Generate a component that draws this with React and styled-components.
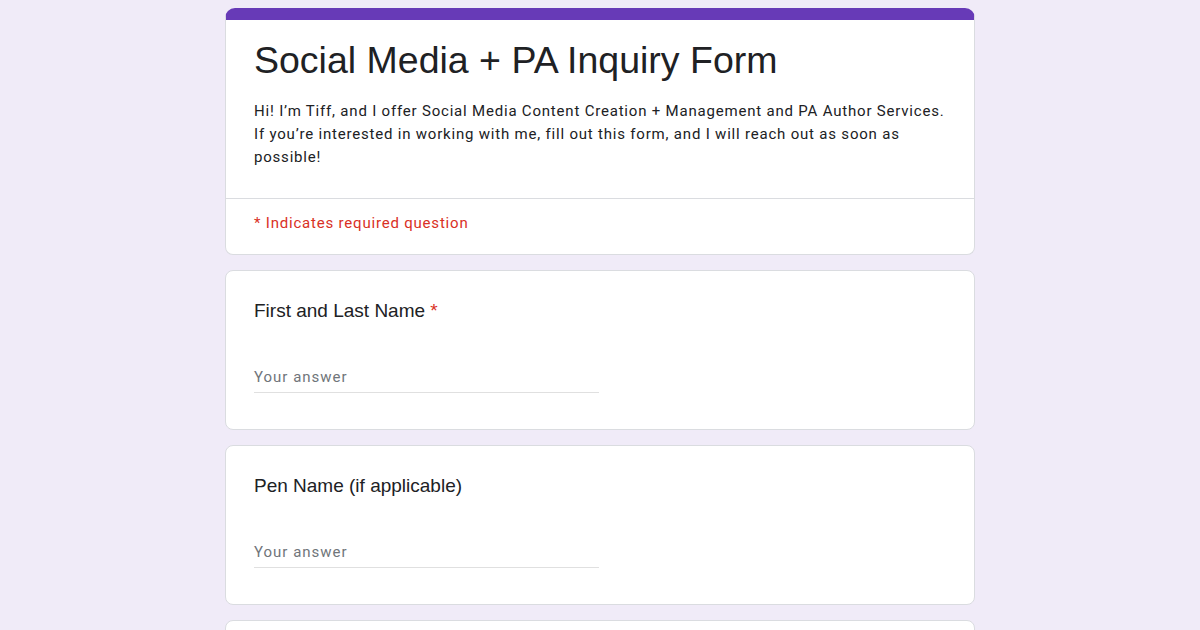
import React from 'react';
import styled, { createGlobalStyle } from 'styled-components';

const GlobalStyle = createGlobalStyle`
  body {
    margin: 0;
    background-color: #f0ebf8;
    font-family: Roboto, Arial, sans-serif;
  }
`;

const Page = styled.div`
  width: 750px;
  margin: 8px auto 0;
  display: flex;
  flex-direction: column;
  gap: 15px;
`;

const Card = styled.div`
  background-color: #fff;
  border: 1px solid #dadce0;
  border-radius: 8px;
  overflow: hidden;
`;

const HeaderCard = styled(Card)`
  border-top: 12px solid #673ab7;
  border-radius: 10px 10px 8px 8px;
`;

const HeaderTop = styled.div`
  padding: 16px 28px 29px;
  border-bottom: 1px solid #dadce0;
`;

const Title = styled.h1`
  margin: 0;
  font-family: 'Liberation Sans', Arial, sans-serif;
  font-weight: 400;
  font-size: 37.5px;
  line-height: 48px;
  color: #202124;
`;

const Description = styled.p`
  margin: 16px 0 0;
  font-size: 15px;
  line-height: 23px;
  letter-spacing: 0.8px;
  white-space: nowrap;
  color: #202124;
`;

const Required = styled.div`
  padding: 14px 28px 21px;
  font-size: 15px;
  line-height: 20px;
  letter-spacing: 0.8px;
  color: #d93025;
`;

const QuestionCard = styled(Card)`
  padding: 27px 28px 36px;
`;

const Label = styled.div`
  font-family: 'Liberation Sans', Arial, sans-serif;
  font-size: 19px;
  line-height: 26px;
  color: #202124;

  span {
    color: #d93025;
  }
`;

const Answer = styled.div`
  margin-top: 38px;
  width: 345px;
  height: 30px;
  border-bottom: 1px solid #e0e0e0;
  font-size: 15px;
  line-height: 30px;
  letter-spacing: 1px;
  color: #70757a;
`;

const Question = ({ label, required }) => (
  <QuestionCard>
    <Label>
      {label}
      {required && <span> *</span>}
    </Label>
    <Answer>Your answer</Answer>
  </QuestionCard>
);

const App = () => {
  return (
    <>
      <GlobalStyle />
      <Page>
        <HeaderCard>
          <HeaderTop>
            <Title>Social Media + PA Inquiry Form</Title>
            <Description>
              Hi! I’m Tiff, and I offer Social Media Content Creation + Management and PA Author Services.
              <br />
              If you’re interested in working with me, fill out this form, and I will reach out as soon as
              <br />
              possible!
            </Description>
          </HeaderTop>
          <Required>* Indicates required question</Required>
        </HeaderCard>
        <Question label="First and Last Name" required />
        <Question label="Pen Name (if applicable)" />
        <Question label="Email" required />
      </Page>
    </>
  );
};

export default App;
